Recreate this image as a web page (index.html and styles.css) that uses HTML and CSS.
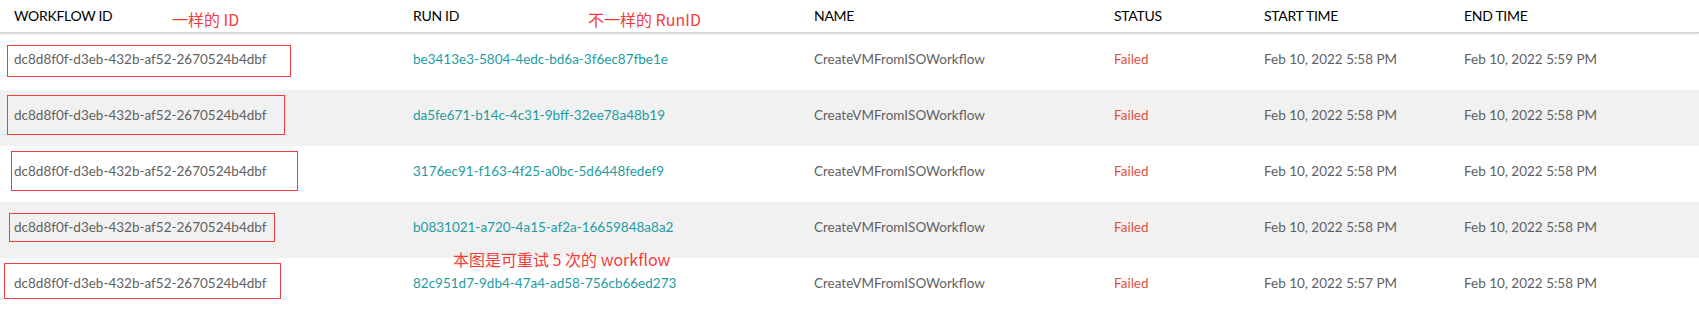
FILE: index.html
```html
<!DOCTYPE html>
<html lang="zh">
<head>
<meta charset="utf-8">
<title>Workflow runs</title>
<link rel="stylesheet" href="styles.css">
</head>
<body>
<div class="table">
  <div class="row head">
    <div class="cell">WORKFLOW ID</div>
    <div class="cell">RUN ID</div>
    <div class="cell">NAME</div>
    <div class="cell">STATUS</div>
    <div class="cell">START TIME</div>
    <div class="cell">END TIME</div>
  </div>
  <div class="row">
    <div class="cell">dc8d8f0f-d3eb-432b-af52-2670524b4dbf</div>
    <div class="cell link">be3413e3-5804-4edc-bd6a-3f6ec87fbe1e</div>
    <div class="cell">CreateVMFromISOWorkflow</div>
    <div class="cell failed">Failed</div>
    <div class="cell">Feb 10, 2022 5:58 PM</div>
    <div class="cell">Feb 10, 2022 5:59 PM</div>
  </div>
  <div class="row alt">
    <div class="cell">dc8d8f0f-d3eb-432b-af52-2670524b4dbf</div>
    <div class="cell link">da5fe671-b14c-4c31-9bff-32ee78a48b19</div>
    <div class="cell">CreateVMFromISOWorkflow</div>
    <div class="cell failed">Failed</div>
    <div class="cell">Feb 10, 2022 5:58 PM</div>
    <div class="cell">Feb 10, 2022 5:58 PM</div>
  </div>
  <div class="row">
    <div class="cell">dc8d8f0f-d3eb-432b-af52-2670524b4dbf</div>
    <div class="cell link">3176ec91-f163-4f25-a0bc-5d6448fedef9</div>
    <div class="cell">CreateVMFromISOWorkflow</div>
    <div class="cell failed">Failed</div>
    <div class="cell">Feb 10, 2022 5:58 PM</div>
    <div class="cell">Feb 10, 2022 5:58 PM</div>
  </div>
  <div class="row alt">
    <div class="cell">dc8d8f0f-d3eb-432b-af52-2670524b4dbf</div>
    <div class="cell link">b0831021-a720-4a15-af2a-16659848a8a2</div>
    <div class="cell">CreateVMFromISOWorkflow</div>
    <div class="cell failed">Failed</div>
    <div class="cell">Feb 10, 2022 5:58 PM</div>
    <div class="cell">Feb 10, 2022 5:58 PM</div>
  </div>
  <div class="row">
    <div class="cell">dc8d8f0f-d3eb-432b-af52-2670524b4dbf</div>
    <div class="cell link">82c951d7-9db4-47a4-ad58-756cb66ed273</div>
    <div class="cell">CreateVMFromISOWorkflow</div>
    <div class="cell failed">Failed</div>
    <div class="cell">Feb 10, 2022 5:57 PM</div>
    <div class="cell">Feb 10, 2022 5:58 PM</div>
  </div>

  <div class="mark mark1"></div>
  <div class="mark mark2"></div>
  <div class="mark mark3"></div>
  <div class="mark mark4"></div>
  <div class="mark mark5"></div>
  <div class="note note1">一样的 ID</div>
  <div class="note note2">不一样的 RunID</div>
  <div class="note note3">本图是可重试 5 次的 workflow</div>
</div>
</body>
</html>
```

FILE: styles.css
```css
html, body {
  margin: 0;
  padding: 0;
  background: #ffffff;
}
body {
  font-family: Lato, "Noto Sans", sans-serif;
  width: 1699px;
  height: 310px;
  overflow: hidden;
}
.table {
  position: relative;
  width: 1699px;
}
.row {
  display: grid;
  grid-template-columns: 399px 401px 300px 150px 200px 1fr;
  align-items: center;
  padding-left: 14px;
  height: 56px;
  font-size: 13.5px;
  color: #616161;
}
.row.alt {
  background: #f1f1f1;
}
.row.head {
  height: 32px;
  border-bottom: 1px solid #d2d2d2;
  box-shadow: 0 1px 2px rgba(0, 0, 0, 0.18);
  color: #000000;
  font-size: 14px;
  letter-spacing: -0.3px;
  margin-bottom: 1px;
}
.row.head .cell {
  padding-bottom: 2px;
}
.cell {
  white-space: nowrap;
  padding-bottom: 6px;
}
.link {
  color: #1d9ca3;
}
.failed {
  color: #e0533f;
}
.mark {
  position: absolute;
  border: 1px solid #f53b3b;
  box-sizing: border-box;
}
.mark1 { left: 7px;  top: 45px;  width: 284px; height: 32px; }
.mark2 { left: 7px;  top: 95px;  width: 278px; height: 40px; }
.mark3 { left: 11px; top: 151px; width: 287px; height: 40px; }
.mark4 { left: 9px;  top: 213px; width: 266px; height: 29px; }
.mark5 { left: 4px;  top: 263px; width: 277px; height: 36px; }
.note {
  position: absolute;
  font-family: "Noto Sans CJK SC", "Noto Sans", sans-serif;
  font-size: 16px;
  line-height: 20px;
  color: #f53b3b;
  white-space: nowrap;
}
.note1 { left: 172px; top: 9px; }
.note2 { left: 588px; top: 9px; }
.note3 { left: 453px; top: 249px; }
```
